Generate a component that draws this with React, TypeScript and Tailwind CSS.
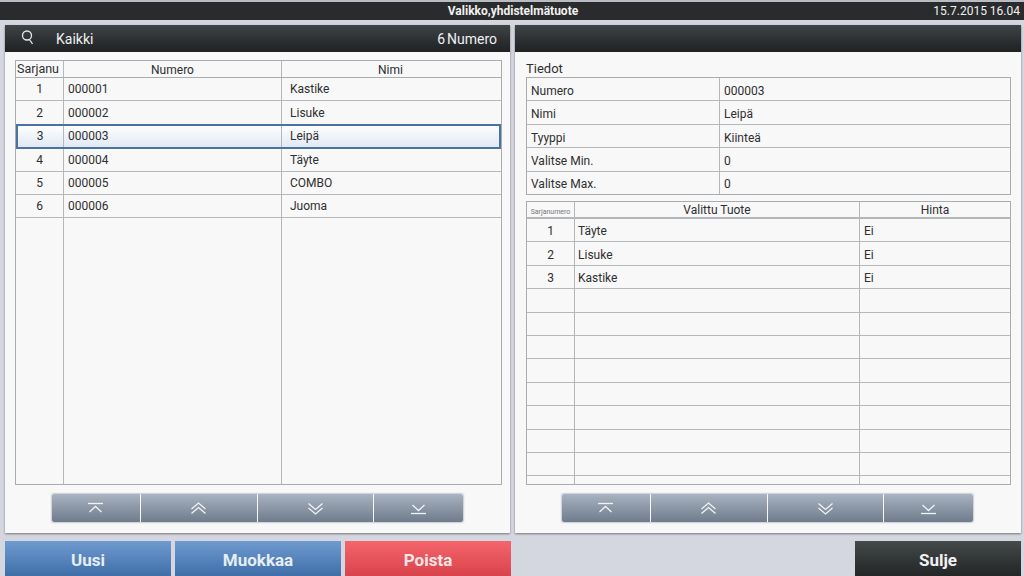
import React from "react";

const Pager = ({ ml }: { ml: string }) => {
  const icons = [
    <><path d="M1 1.5H16" /><path d="M2.5 10L8.5 4.5L14.5 10" /></>,
    <><path d="M1.5 7L8.5 1L15.5 7" /><path d="M1.5 11.5L8.5 5.5L15.5 11.5" /></>,
    <><path d="M1.5 1.5L8.5 7.5L15.5 1.5" /><path d="M1.5 6L8.5 12L15.5 6" /></>,
    <><path d="M2.5 3L8.5 8.5L14.5 3" /><path d="M1 11.5H16" /></>,
  ];
  const widths = ["w-[88px]", "w-[116px]", "w-[116px]", "w-[89px]"];
  return (
    <div className={`flex h-[28px] mt-[9px] ${ml} w-[411px] gap-[1px] shadow-[0_0_2px_#7f8b99]`}>
      {icons.map((ic, i) => (
        <div key={i} className={`${widths[i]} flex items-center justify-center bg-gradient-to-b from-[#a9b3c2] to-[#6f7c8b] ${i === 0 ? "rounded-l-[2px]" : ""} ${i === 3 ? "rounded-r-[2px]" : ""}`}>
          <svg width="17" height="13" viewBox="0 0 17 13" fill="none" stroke="#f0f3f5" strokeWidth="1.3">{ic}</svg>
        </div>
      ))}
    </div>
  );
};

const Header = ({ children }: { children?: React.ReactNode }) => (
  <div className="h-[27px] shrink-0 flex items-center bg-gradient-to-b from-[#3f4447] to-[#1f2123] text-[#eef0f0] text-[14px] pt-[1px]">{children}</div>
);

const Cell = ({ w, center, children, cls = "" }: { w: string; center?: boolean; children?: React.ReactNode; cls?: string }) => (
  <div className={`${w} h-full flex items-center border-r border-[#b4b8bb] last:border-r-0 ${center ? "justify-center" : ""} ${cls}`}>{children}</div>
);

const left = [["1", "000001", "Kastike"], ["2", "000002", "Lisuke"], ["3", "000003", "Leipä"], ["4", "000004", "Täyte"], ["5", "000005", "COMBO"], ["6", "000006", "Juoma"]];
const info = [["Numero", "000003"], ["Nimi", "Leipä"], ["Tyyppi", "Kiinteä"], ["Valitse Min.", "0"], ["Valitse Max.", "0"]];
const right = [["1", "Täyte", "Ei"], ["2", "Lisuke", "Ei"], ["3", "Kastike", "Ei"], ...Array.from({ length: 8 }, () => ["", "", ""])];

const BottomBtn = ({ label, cls }: { label: string; cls: string }) => (
  <div className={`w-[166px] h-[35px] flex items-center justify-center font-bold text-[17px] pt-[4px] ${cls}`}>{label}</div>
);

export default function App() {
  return (
    <div className="w-[1024px] h-[576px] overflow-hidden bg-[#d5d7e0] text-[#2f2f2f] text-[12px] flex flex-col" style={{ fontFamily: "Roboto, sans-serif" }}>
      <div className="h-[2px] bg-[#b9bdc3]" />
      <div className="h-[18px] shrink-0 bg-[#2a2b2d] text-[#f1f1f1] text-[12px] flex items-center">
        <div className="w-[1024px] text-center font-bold pl-[2px] pr-0">Valikko,yhdistelmätuote</div>
        <div className="-ml-[100px] w-[96px] text-right whitespace-nowrap">15.7.2015 16.04</div>
      </div>
      <div className="flex pl-[5px] pr-[3px] gap-[5px] mt-[5px] h-[508px]">
        <div className="w-[505px] shrink-0 bg-[#f8f8f8] shadow-[0_1px_2px_#777] flex flex-col">
          <Header>
            <div className="w-[46px] flex justify-center">
              <svg width="16" height="18" viewBox="0 0 16 18" fill="none" stroke="#e8eaea" strokeWidth="1.3" className="-mt-[2px]"><circle cx="7" cy="6.5" r="4.5" /><path d="M9.5 11C11 12 11.5 13.5 12.5 15" /></svg>
            </div>
            <span className="ml-[5px]">Kaikki</span>
            <span className="ml-auto mr-[13px]">6<span className="ml-[2px]">Numero</span></span>
          </Header>
          <div className="ml-[10px] w-[487px] mt-[8px] h-[425px] border border-[#a9adb2] flex flex-col relative">
            <div className="h-[17px] shrink-0 flex border-b border-[#a9adb2] text-[12px]">
              <Cell w="w-[48px]" center cls="text-[12.5px] pr-[3px]">Sarjanu</Cell>
              <Cell w="w-[218px]" center cls="pt-[1px]">Numero</Cell>
              <Cell w="flex-1" center cls="pt-[1px] pr-[2px]">Nimi</Cell>
            </div>
            {left.map((r, i) => (
              <div key={i} className={`h-[23.4px] shrink-0 flex ${i === 2 ? "bg-gradient-to-b from-[#ffffff] to-[#dfe8f2] outline-2 -outline-offset-1 outline-[#4c73a0] mx-[1px] relative z-10" : "border-b border-[#b4b8bb]"}`}>
                <Cell w={i === 2 ? "w-[47px]" : "w-[48px]"} center cls={i === 2 ? "" : "pt-[0.5px]"}>{r[0]}</Cell>
                <Cell w="w-[218px]" cls={i === 2 ? "pl-[4px]" : "pl-[4px] pt-[0.5px]"}>{r[1]}</Cell>
                <Cell w="flex-1" cls={i === 2 ? "pl-[8px]" : "pl-[8px] pt-[0.5px]"}>{r[2]}</Cell>
              </div>
            ))}
            <div className="flex-1 flex">
              <Cell w="w-[48px]" />
              <Cell w="w-[218px]" />
              <Cell w="flex-1" />
            </div>
          </div>
          <Pager ml="ml-[47px]" />
        </div>
        <div className="w-[506px] shrink-0 bg-[#f8f8f8] shadow-[0_1px_2px_#777] flex flex-col">
          <Header />
          <div className="ml-[11px] mt-[8px] h-[17px] text-[13px] leading-[17px]">Tiedot</div>
          <div className="mx-[11px] w-[485px] border border-[#a9adb2] h-[118px] shrink-0 flex flex-col">
            {info.map((r, i) => (
              <div key={i} className="flex-1 flex border-b border-[#b4b8bb] last:border-b-0">
                <Cell w="w-[193px]" cls="pl-[4px] pt-[3px]">{r[0]}</Cell>
                <Cell w="flex-1" cls="pl-[4px] pt-[3px]">{r[1]}</Cell>
              </div>
            ))}
          </div>
          <div className="mx-[11px] w-[485px] mt-[6px] h-[284px] shrink-0 border border-[#a9adb2] flex flex-col overflow-hidden">
            <div className="h-[17px] shrink-0 flex border-b-2 border-[#b4b8bb]">
              <Cell w="w-[48px]" center cls="text-[7px] text-[#777] pt-[6px]">Sarjanumero</Cell>
              <Cell w="w-[285px]" center cls="pt-[1px]">Valittu Tuote</Cell>
              <Cell w="flex-1" center cls="pt-[1px]">Hinta</Cell>
            </div>
            {right.map((r, i) => (
              <div key={i} className="h-[23.4px] shrink-0 flex border-b border-[#b4b8bb]">
                <Cell w="w-[48px]" center cls="pt-[2px]">{r[0]}</Cell>
                <Cell w="w-[285px]" cls="pl-[3px] pt-[2px]">{r[1]}</Cell>
                <Cell w="flex-1" cls="pl-[4px] pt-[2px]">{r[2]}</Cell>
              </div>
            ))}
            <div className="flex-1 flex">
              <Cell w="w-[48px]" />
              <Cell w="w-[285px]" />
              <Cell w="flex-1" />
            </div>
          </div>
          <Pager ml="ml-[47px]" />
        </div>
      </div>
      <div className="flex pl-[5px] pr-[3px] mt-[8px] gap-[4px]">
        <BottomBtn label="Uusi" cls="bg-gradient-to-b from-[#6f9bd0] to-[#3f6ea8] text-[#e6edf5]" />
        <BottomBtn label="Muokkaa" cls="bg-gradient-to-b from-[#6f9bd0] to-[#3f6ea8] text-[#e6edf5]" />
        <BottomBtn label="Poista" cls="bg-gradient-to-b from-[#f4656b] to-[#d9434b] text-[#f8e6e6]" />
        <BottomBtn label="Sulje" cls="ml-auto bg-gradient-to-b from-[#454a4b] to-[#232526] text-[#f1f1f1]" />
      </div>
    </div>
  );
}
